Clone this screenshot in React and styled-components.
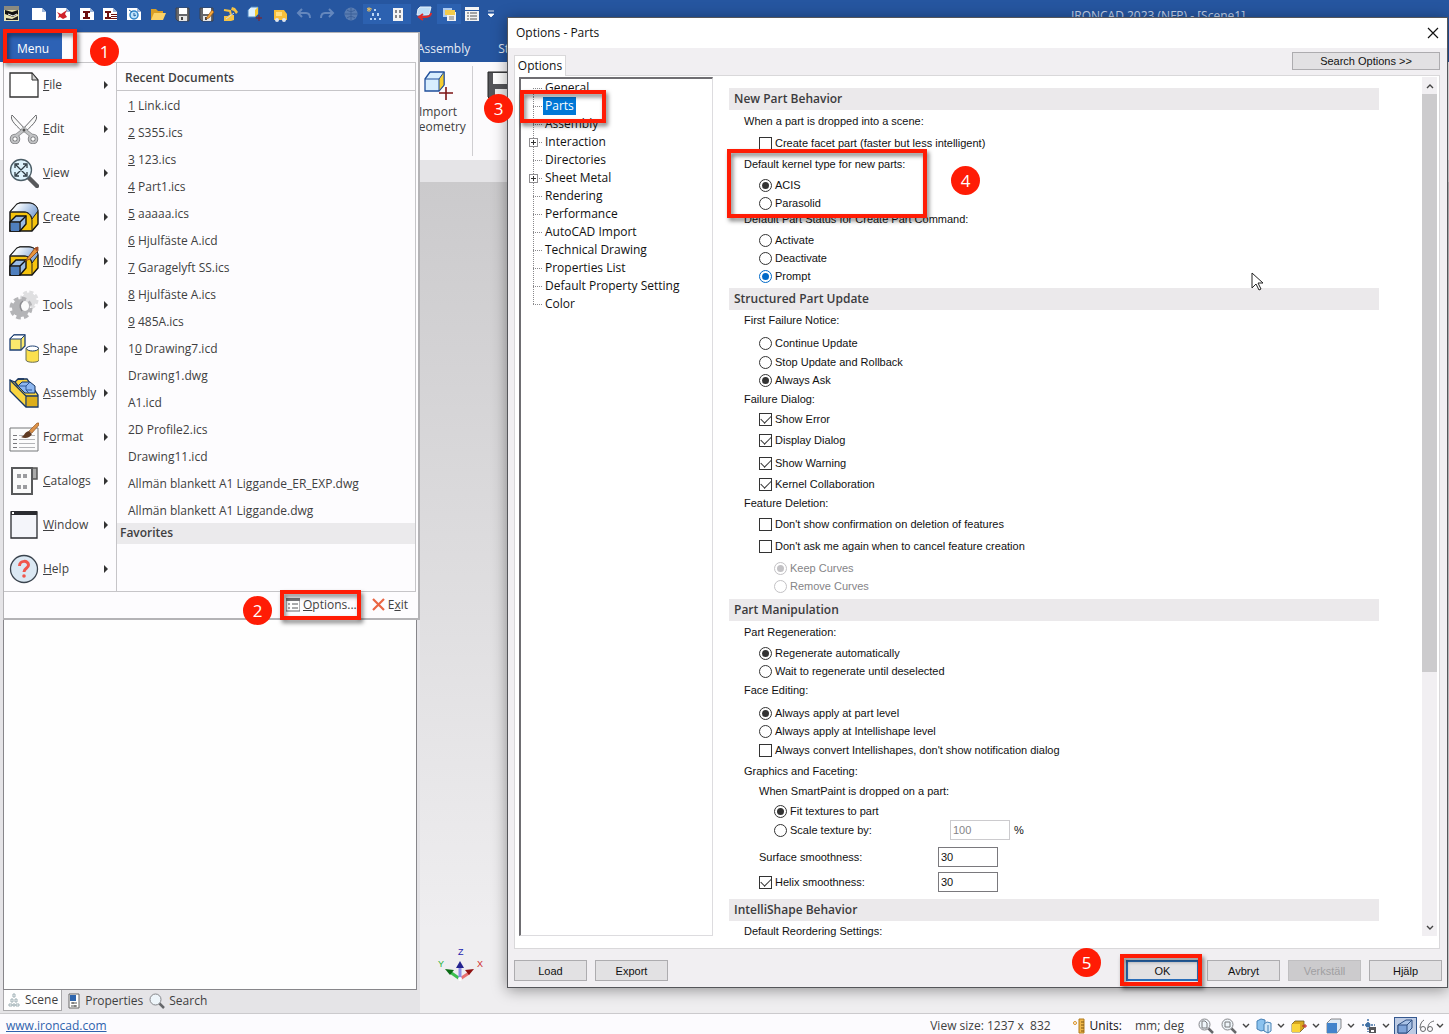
import React from 'react';
import styled, { createGlobalStyle, css } from 'styled-components';

const UI = '"Open Sans", "Noto Sans", sans-serif';
const SYS = '"Liberation Sans", Arial, sans-serif';

const GlobalStyle = createGlobalStyle`
  * { box-sizing: border-box; }
  html, body, #root { height: 100%; }
  body { margin: 0; overflow: hidden; font: 12px/16px ${UI}; color: #3f3f41; background: #efeef0; }
  button { font: inherit; color: inherit; padding: 0; border: 0; background: none; }
  ul { list-style: none; margin: 0; padding: 0; }
  h1, h2, h3, p { margin: 0; font: inherit; }
  svg { display: block; flex: none; }
`;

/* ---------- application shell ---------- */

const Shell = styled.div`
  position: relative;
  display: flex;
  flex-direction: column;
  height: 100vh;
  overflow: hidden;
`;

const TitleBar = styled.header`
  display: flex;
  align-items: center;
  flex: none;
  height: 28px;
  padding-left: 4px;
  background: #2656a0;
  > :first-child { margin-right: 7px; }
`;

const QuickButton = styled.button`
  display: grid;
  place-items: center;
  flex: none;
  width: ${p => p.$w || 24}px;
  height: 20px;
  opacity: ${p => (p.$dim ? 0.35 : 1)};
  background: ${p => (p.$on ? '#2c61b0' : 'none')};
`;

const AppTitle = styled.h1`
  flex: 1;
  padding: 4px 0 0 368px;
  text-align: center;
  white-space: nowrap;
  min-width: 0;
  overflow: hidden;
  color: #c3d2e8;
`;

const RibbonTabs = styled.nav`
  display: flex;
  flex: none;
  gap: 28px;
  height: 34px;
  padding: 13px 0 0 417px;
  color: #e4ebf5;
  background: #2656a0;
`;

const Ribbon = styled.div`
  display: flex;
  flex: none;
  height: 98px;
  padding: 4px 0 4px 404px;
  background: #fcfbfd;
`;

const RibbonGroup = styled.div`
  display: flex;
  border-right: 1px solid #cfced1;
`;

const RibbonButton = styled.button`
  display: flex;
  flex-direction: column;
  align-items: center;
  width: 68px;
  padding-top: 4px;
  line-height: 15px;
  svg { margin-bottom: 4px; }
`;

const DocumentStrip = styled.div`
  flex: none;
  height: 22px;
  background: #e5e4e7;
`;

const Workspace = styled.main`
  display: flex;
  flex: 1;
  min-height: 0;
  background: linear-gradient(#cbcacc, #dddcde 45%, #efeef0 90%);
`;

const SidePanel = styled.aside`
  display: flex;
  flex-direction: column;
  width: 420px;
  padding-left: 3px;
  background: #e5e4e7;
`;

const SceneTree = styled.div`
  flex: 1;
  margin-right: 3px;
  border: 1px solid #87868a;
  background: #fefefe;
`;

const SceneTabs = styled.div`
  display: flex;
  height: 23px;
`;

const SceneTab = styled.button`
  display: flex;
  align-items: center;
  gap: 4px;
  height: 21px;
  padding: 0 3px;
  border: solid #a9a8ab;
  border-width: ${p => (p.$active ? '0 1px 1px' : '0')};
  background: ${p => (p.$active ? '#fefefe' : 'none')};
`;

const Canvas = styled.section`
  display: flex;
  align-items: flex-end;
  flex: 1;
  padding: 0 0 29px 16px;
`;

const StatusBar = styled.footer`
  display: flex;
  align-items: center;
  flex: none;
  height: 21px;
  padding: 3px 4px 0 6px;
  border-top: 1px solid #cbcacd;
  background: #fcfbfe;
  white-space: pre;
  a { color: #2f62ad; text-decoration: underline; flex: 1; }
`;

const Units = styled.div`
  display: flex;
  align-items: center;
  gap: 5px;
  margin: 0 12px 0 22px;
  strong { font-weight: 400; color: #111; margin-right: 8px; }
`;

const StatusButton = styled.button`
  display: flex;
  align-items: center;
  gap: ${p => p.$gap || 5}px;
  width: ${p => p.$w}px;
  height: 18px;
  padding: 0 2px;
  ${p => p.$on && css`background: #bdcbe4; border: 1px solid #35588f;`}
`;

/* ---------- application menu ---------- */

const MenuPanel = styled.section`
  position: absolute;
  left: 3px;
  top: 32px;
  width: 417px;
  border: solid #b4b3b6;
  border-width: 1px 2px 2px 1px;
  background: #fdfcfe;
`;

const MenuTab = styled.button`
  display: block;
  width: 58px;
  height: 29px;
  padding-top: 2px;
  color: #fff;
  background: #2d62b5;
`;

const MenuColumns = styled.div`
  display: grid;
  grid-template-columns: 113px 1fr;
  margin-right: 2px;
  border: solid #c6c5c8;
  border-width: 1px 1px 1px 0;
`;

const MenuList = styled.ul`
  border-right: 1px solid #c6c5c8;
`;

const MenuItem = styled.button`
  display: flex;
  align-items: center;
  gap: 4px;
  width: 100%;
  height: 44px;
  padding: 0 8px 0 5px;
  text-align: left;
  &::after {
    content: '';
    margin-left: auto;
    border: solid transparent;
    border-width: 4px 0 4px 4px;
    border-left-color: #333;
  }
`;

const RecentTitle = styled.h2`
  height: 28px;
  padding: 7px 8px 0;
  border-bottom: 1px solid #c6c5c8;
  font-weight: 600;
`;

const RecentItem = styled.button`
  display: block;
  width: 100%;
  height: 27px;
  padding: 2px 0 0 11px;
  text-align: left;
`;

const FavoritesTitle = styled.h2`
  height: 21px;
  padding: 2px 3px;
  font-weight: 600;
  background: #ebeaec;
`;

const MenuFooter = styled.div`
  display: flex;
  justify-content: flex-end;
  gap: 15px;
  height: 26px;
  padding: 0 10px 1px 0;
`;

const FooterButton = styled.button`
  display: flex;
  align-items: center;
  gap: 3px;
`;

/* ---------- options dialog ---------- */

const Dialog = styled.section`
  position: absolute;
  left: 507px;
  right: 1px;
  top: 17px;
  bottom: 46px;
  display: flex;
  flex-direction: column;
  border: 1px solid #55565a;
  background: #f1eff2;
  box-shadow: 0 2px 14px rgba(0, 0, 0, 0.4);
  color: #111;
`;

const DialogHeader = styled.header`
  display: flex;
  align-items: center;
  justify-content: space-between;
  flex: none;
  height: 30px;
  padding: 0 8px;
  background: #fff;
`;

const DialogTop = styled.div`
  display: flex;
  justify-content: space-between;
  align-items: flex-end;
  flex: none;
  height: 27px;
  padding: 0 7px 0 6px;
`;

const DialogTab = styled.button`
  height: 21px;
  width: 52px;
  margin-bottom: -1px;
  border: 1px solid #d9d8da;
  border-bottom: 0;
  background: #fff;
  z-index: 1;
`;

const PushButton = styled.button`
  width: ${p => p.$w || 73}px;
  height: ${p => p.$h || 21}px;
  border: 1px solid #adacaf;
  background: #e2e1e3;
  font: 11px/16px ${SYS};
  ${p => p.$primary && css`border: 2px solid #2a6db8;`}
  &:disabled { color: #a09fa2; background: #cccbcd; border-color: #c0bfc1; }
`;

const SearchWrap = styled.div`
  align-self: flex-start;
  padding-top: 4px;
  display: flex;
`;

const DialogBody = styled.div`
  display: flex;
  flex: 1;
  min-height: 0;
  margin: 0 7px 0 6px;
  padding: 1px 2px 0 4px;
  border: 1px solid #d9d8da;
  background: #fff;
`;

const Tree = styled.ul`
  flex: none;
  width: 194px;
  margin-bottom: 12px;
  border: solid #6f6e72;
  border-width: 2px 1px 1px 2px;
  border-right-color: #dddcdf;
  border-bottom-color: #dddcdf;
`;

const TreeItem = styled.li`
  display: flex;
  align-items: center;
  height: 18px;
  padding-left: 8px;
`;

const TreeGuide = styled.span`
  display: flex;
  align-items: center;
  width: 14px;
  height: 18px;
  padding-left: 4px;
  background:
    repeating-linear-gradient(90deg, #8a898c 0 1px, transparent 1px 2px) 4px 9px / 9px 1px no-repeat,
    repeating-linear-gradient(#8a898c 0 1px, transparent 1px 2px)
      4px ${p => (p.$first ? '9px' : '0')} / 1px ${p => (p.$last ? '9px' : '18px')} no-repeat;
`;

const Expander = styled.button`
  display: grid;
  place-items: center;
  width: 9px;
  height: 9px;
  margin-left: -4px;
  border: 1px solid #8f8e91;
  background: #fff;
`;

const TreeLabel = styled.span`
  padding: 0 2px;
  line-height: 18px;
  ${p => p.$selected && css`color: #fff; background: #0078d7;`}
`;

const OptionsPane = styled.div`
  flex: 1;
  min-width: 0;
  overflow: hidden;
  padding: 11px 43px 0 16px;
  font: 11px/14px ${SYS};
`;

const SectionTitle = styled.h3`
  height: 22px;
  margin-top: ${p => p.$gap || 0}px;
  padding: 0 5px;
  font: 600 12px/22px ${UI};
  color: #3b3b3d;
  background: #ebe9eb;
`;

const Caption = styled.p`
  height: 14px;
  margin-top: ${p => p.$gap || 0}px;
  padding-left: ${p => (p.$inset ? 30 : 15)}px;
`;

const Line = styled.div`
  display: flex;
  align-items: center;
  height: ${p => p.$h || 18}px;
  margin-top: ${p => p.$gap || 0}px;
  padding-left: ${p => (p.$inset ? 45 : 30)}px;
`;

const Choice = styled.label`
  display: flex;
  align-items: center;
  gap: 3px;
  color: ${p => (p.$off ? '#858487' : 'inherit')};
`;

const Mark = styled.input`
  appearance: none;
  display: grid;
  place-items: center;
  width: 13px;
  height: 13px;
  margin: 0;
  border: 1px solid ${p => p.$tone || '#333'};
  border-radius: ${p => (p.type === 'radio' ? '50%' : '0')};
  background: #fff;
  &:checked::after {
    content: '';
    ${p => p.type === 'radio'
      ? css`width: 7px; height: 7px; border-radius: 50%; background: ${p.$tone || '#333'};`
      : css`width: 9px; height: 5px; margin-top: -3px; border: solid #333; border-width: 0 0 1px 1px; transform: rotate(-45deg);`}
  }
`;

const FieldLabel = styled.div`
  width: ${p => p.$w}px;
`;

const NumberBox = styled.input`
  width: 60px;
  height: 20px;
  margin: 0 4px 0 0;
  padding: 0 2px;
  border: 1px solid #7a797d;
  border-radius: 0;
  background: #fff;
  font: 11px/16px ${SYS};
  color: #111;
  &:disabled { color: #858487; border-color: #cccbce; }
`;

const ScrollBar = styled.div`
  display: flex;
  flex-direction: column;
  width: 15px;
  margin-bottom: 12px;
  background: #f1eff2;
`;

const ScrollButton = styled.button`
  display: grid;
  place-items: center;
  height: 17px;
  flex: none;
`;

const ScrollTrack = styled.div`
  flex: 1;
`;

const ScrollThumb = styled.div`
  height: 70%;
  background: #cccbcd;
`;

const DialogButtons = styled.footer`
  display: flex;
  flex: none;
  gap: 8px;
  height: 38px;
  padding: 11px 5px 0 6px;
  > :nth-child(2) { margin-right: auto; }
`;

/* ---------- walkthrough annotations ---------- */

const Frame = styled.div`
  position: absolute;
  left: ${p => p.$x}px;
  top: ${p => p.$y}px;
  width: ${p => p.$w}px;
  height: ${p => p.$h}px;
  border: 4px solid #ff1c05;
  filter: drop-shadow(2px 3px 2px rgba(0, 0, 0, 0.5));
  pointer-events: none;
`;

const Step = styled.div`
  position: absolute;
  left: ${p => p.$x}px;
  top: ${p => p.$y}px;
  width: 29px;
  height: 29px;
  border-radius: 50%;
  text-align: center;
  font: 17px/29px ${UI};
  color: #fff;
  background: #ff1c05;
`;

const OkSlot = styled.div`
  position: relative;
  display: flex;
`;

const Pointer = styled.svg`
  position: absolute;
  left: 1251px;
  top: 272px;
`;

/* ---------- drawings ---------- */

const Ico = ({ s = 16, h, children, ...rest }) => (
  <svg width={s} height={h || s} viewBox={`0 0 ${s} ${h || s}`} fill="none" aria-hidden="true" {...rest}>{children}</svg>
);

const Page = ({ children }) => (
  <Ico><path d="M1 2h10l4 4v8H1z" fill="#fff" /><path d="M11 2v4h4z" fill="#9db5d8" />{children}</Ico>
);

const Floppy = ({ children }) => (
  <Ico><path d="M1 2h13v13H3l-2-2z" fill="#66676b" stroke="#3d3e42" strokeWidth=".8" /><path d="M4 2h8v6H4z" fill="#fff" /><path d="M4 10h8v5H4z" fill="#e5e5e5" /><path d="M6 11h2v3H6z" fill="#444" />{children}</Ico>
);

const quick = [
  { n: 'IronCAD', w: 16, i: <Ico><path d="M0 0h15v15H0z" fill="#e8e3b4" /><path d="M0 0h15v4H0z" fill="#8a8a80" /><path d="M1 4l7 2 6-2v4l-5 3-8-3z" fill="#111" /><path d="M2 12l6 1 6-3v4H2z" fill="#222" /><path d="M4 8l5 2 4-2" stroke="#fff" /></Ico> },
  { n: 'New', i: <Page /> },
  { n: 'New scene', i: <Page><path d="M2 6l4 2 6-4-2 4 2 3-4 2-3-2-2 1 1-3z" fill="#d0222a" /></Page> },
  { n: 'New drawing', w: 23, i: <Page><path d="M4 5h7v2H9v4h2v2H4v-2h2V7H4z" fill="#6d1010" /></Page> },
  { n: 'New structure', i: <Page><path d="M3 5h6v2H7v4h2v2H3v-2h2V7H3zM9 8h6v1H9zM9 10h6v1H9zM9 12h6v1H9z" fill="#6d1010" /></Page> },
  { n: 'Find', i: <Page><circle cx="8" cy="9" r="4" fill="#bfe2fa" stroke="#2f86c8" strokeWidth="1.5" /><path d="M8 7v3l2-1M3 4l3 2" stroke="#1d5f9e" /></Page> },
  { n: 'Open', i: <Ico><path d="M1 3h5l2 2h5v9H1z" fill="#d99f26" /><path d="M1 14l3-7h12l-3 7z" fill="#fbd267" /></Ico> },
  { n: 'Save', w: 25, i: <Floppy /> },
  { n: 'Save as', i: <Floppy><path d="M8 11l5-7 2 2-5 6-3 1z" fill="#f4a63a" stroke="#8d4b12" strokeWidth=".6" /></Floppy> },
  { n: 'Send', i: <Ico><path d="M1 10h4l1-1h5v5l-3 1H1z" fill="#f5c244" /><path d="M9 1l3 1 3 4-2 2-2-3-3-1z" fill="#f5c244" /><path d="M1 4l6 1 1 4" stroke="#f5c244" strokeWidth="2" /><path d="M3 13l8-6" stroke="#c9d8ec" /></Ico> },
  { n: 'Import', w: 23, i: <Ico><path d="M1 4l3-3h7v7l-3 3H1z" fill="#dff1ff" stroke="#4b82bf" /><path d="M8 4l3-3v7l-3 3z" fill="#f5c933" /><path d="M12 9v6M9 12h6" stroke="#8b1a1a" /></Ico> },
  { n: 'Export', w: 27, i: <Ico><path d="M2 4h10l3 4v6H2z" fill="#f8bf3a" /><path d="M4 6h6v4H4z" fill="#ffdf83" /><circle cx="5" cy="14" r="2" fill="#dfe5ee" /><circle cx="12" cy="14" r="2" fill="#dfe5ee" /></Ico> },
  { n: 'Undo', w: 22, dim: 1, i: <Ico><path d="M6 3L2 7l4 4M2 7h8c3 0 4 2 4 5" stroke="#d8e3f5" strokeWidth="2" /></Ico> },
  { n: 'Redo', dim: 1, i: <Ico><path d="M10 3l4 4-4 4M14 7H6c-3 0-4 2-4 5" stroke="#d8e3f5" strokeWidth="2" /></Ico> },
  { n: 'Web', dim: 1, i: <Ico><circle cx="8" cy="8" r="6.500" fill="#b9c3d2" /><path d="M2 8h12M8 2v12M4 4c3 2 5 2 8 0M4 12c3-2 5-2 8 0" stroke="#64748c" /></Ico> },
  { n: 'Tree', on: 1, w: 22, i: <Ico><path d="M3 1v5M1 3h5M1 2l4 3M5 2L1 5" stroke="#f4c55c" strokeWidth=".8" /><path d="M8 3h2v2H8zM6 7h2v3H6zM11 7h2v3h-2zM4 12h2v2H4zM8 12h2v2H8zM13 12h2v2h-2z" fill="#b9d5f5" /></Ico> },
  { n: 'Catalog', on: 1, w: 26, i: <Ico><path d="M3 2h10v13H3z" fill="#f4f4f4" /><path d="M5 4h2v3H5zM9 4h2v3H9zM5 9h2v3H5zM9 9h2v3H9z" fill="#85868a" /></Ico> },
  { n: 'Swap', w: 26, i: <Ico><path d="M2 3l2-2h11l-2 8H1z" fill="#bddcf5" stroke="#e4f0fb" /><path d="M15 7c0 3-3 4-7 4H4M7 8l-4 3 4 3" stroke="#dc2b2b" strokeWidth="2" /></Ico> },
  { n: 'Layers', on: 1, i: <Ico><path d="M2 2h9v9H2z" fill="#aecbef" /><path d="M6 6h9v9H6z" fill="#f2f2f2" /><path d="M4 4h10v5H4z" fill="#f4cb4b" /><path d="M8 11h5M8 13h5" stroke="#777" /></Ico> },
  { n: 'List', w: 22, i: <Ico><path d="M1 1h14v3H1zM1 5h14v10H1z" fill="#f4f4f4" /><path d="M3 7h2M3 10h2M3 13h2M6 7h7M6 10h7M6 13h7" stroke="#555" /></Ico> },
  { n: 'Customize', w: 16, i: <Ico s={8}><path d="M1 1h6M1 4h6L4 7z" stroke="#fff" fill="#fff" strokeWidth=".8" /></Ico> },
];

const Block = ({ pencil }) => (
  <Ico s={30}>
    <defs>
      <linearGradient id="blockTop" x1="0" y1="0" x2="1" y2="0.400">
        <stop offset="0.300" stopColor="#f4f8fd" /><stop offset="1" stopColor="#86a9d8" />
      </linearGradient>
    </defs>
    <path d="M1 10L8 2l3-1h9c5 0 9 4 9 9v12l-6 7H1z" fill="#f6c40e" stroke="#111" strokeWidth="1.400" />
    <path d="M1 10L8 2l3-1h9c5 0 9 4 9 8l-6 8c-1-5-4-7-8-7z" fill="url(#blockTop)" stroke="#222" />
    <path d="M1 10h14c4 0 7 3 8 8v11" stroke="#222" />
    <path d="M1 20l6-6h10v8l-6 7H1z" fill="#9cbce6" stroke="#111" strokeWidth="1.400" />
    <path d="M1 20h10l6-6M11 20v9" stroke="#111" strokeWidth="1.400" />
    <path d="M2 21h8v8H2z" fill="#4f7fbe" />
    {pencil && <path d="M17 14L26 2l3-1v4l-8 8-5 2z" fill="#e9953b" stroke="#7b3a10" strokeWidth=".8" />}
    {pencil && <path d="M26 2l3-1v3l-2 1z" fill="#a34a2a" />}
  </Ico>
);

const menu = [
  ['', 'F', 'ile', <Ico s={30} key="i"><path d="M1 3h22l6 7v17H1z" fill="#fff" stroke="#333" strokeWidth="1.3" /><path d="M23 3v7h6z" fill="#d2d2d2" stroke="#333" /></Ico>],
  ['', 'E', 'dit', <Ico s={30} key="i"><path d="M3 1c-2 4 1 8 11 17l3-2z" fill="#fafafa" stroke="#66676a" /><path d="M27 1c2 4-1 8-11 17l-3-2z" fill="#fafafa" stroke="#66676a" /><path d="M13 14l10 8M17 14L7 22" stroke="#8b8c8f" strokeWidth="4" /><circle cx="6" cy="25" r="3.5" fill="#fff" stroke="#77787b" strokeWidth="3.500" /><circle cx="24" cy="25" r="3.5" fill="#fff" stroke="#77787b" strokeWidth="3.500" /><circle cx="6" cy="25" r="3.5" stroke="#c2c3c5" strokeWidth="2" /><circle cx="24" cy="25" r="3.5" stroke="#c2c3c5" strokeWidth="2" /><path d="M13 14l10 8M17 14L7 22" stroke="#c2c3c5" strokeWidth="2.500" /><circle cx="15" cy="16" r="1.5" fill="#555" /></Ico>],
  ['', 'V', 'iew', <Ico s={30} key="i"><path d="M20 20l8 8" stroke="#58595b" strokeWidth="4.5" strokeLinecap="round" /><circle cx="12" cy="12" r="10.5" fill="#def3fc" stroke="#4b5d66" strokeWidth="1.3" /><path d="M7 7l10 10M17 7L7 17M6 10V6h4M14 6h4v4M18 14v4h-4M10 18H6v-4" stroke="#2e3b42" strokeWidth="1.3" /></Ico>],
  ['', 'C', 'reate', <Block key="i" />],
  ['', 'M', 'odify', <Block pencil key="i" />],
  ['', 'T', 'ools', <Ico s={30} key="i"><g stroke="#dfdfe1"><circle cx="20" cy="10" r="7" fill="#dfdfe1" strokeWidth="1" /><circle cx="20" cy="10" r="8" strokeWidth="3" strokeDasharray="4 2.300" /></g><circle cx="12" cy="18" r="9" fill="#b4b4b7" /><circle cx="12" cy="18" r="9.500" stroke="#b4b4b7" strokeWidth="4" strokeDasharray="4.500 3" /><ellipse cx="16" cy="16" rx="4" ry="5" fill="#fbfbfb" /><path d="M14 11c-3 2-4 6-1 10" stroke="#8d8d91" strokeWidth="1.5" /></Ico>],
  ['', 'S', 'hape', <Ico s={30} key="i"><path d="M1 5l4-4h11v11l-4 4H1z" fill="#fbe96d" stroke="#1d3f73" strokeWidth="1.3" /><path d="M1 5l4-4h11l-4 4z" fill="#fff" stroke="#1d3f73" /><path d="M12 5v11" stroke="#1d3f73" /><path d="M17 14v12c0 3 13 3 13 0V14z" fill="#fbe04d" stroke="#6b6f55" /><ellipse cx="23.500" cy="14.500" rx="6" ry="2.500" fill="#fff" stroke="#1d3f73" /></Ico>],
  ['', 'A', 'ssembly', <Ico s={30} key="i"><path d="M1 2l5 2 3-3h9l11 16v12H17L1 13z" fill="#f9d540" stroke="#173561" strokeWidth="1.300" /><path d="M1 2l16 16v11M17 18h12M6 4l3 4M9 1l6 0" stroke="#173561" strokeWidth="1.300" /><path d="M18 19h10v9H18z" fill="#dcae1c" /><path d="M9 8l4-4h8l5 4v7H16z" fill="#8db6ef" stroke="#173561" /><path d="M9 8h8l4-4M17 8v4l3 3M17 12h6" stroke="#2c5699" /></Ico>],
  ['F', 'o', 'rmat', <Ico s={30} key="i"><path d="M1 6h28v23H1z" fill="#fcfcfc" stroke="#77787b" /><path d="M4 13.500h4M4 17.500h4M4 21.500h4M4 25.500h4" stroke="#77787b" /><path d="M10 13.500h16M10 17.500h16M10 21.500h16M10 25.500h16" stroke="#b4b5b8" /><path d="M20 9l8-8h2v2l-7 8z" fill="#dc9149" stroke="#8a4d18" strokeWidth=".6" /><path d="M12 15c4-1 3-5 8-6l3 3c-2 4-7 5-11 3z" fill="#5f3a22" /></Ico>],
  ['', 'C', 'atalogs', <Ico s={30} key="i"><path d="M23 2h5v11h-5z" fill="#aaa" stroke="#555" strokeWidth="1.500" /><path d="M3 2h20v26H3z" fill="#fbfbfb" stroke="#58595b" strokeWidth="2" /><path d="M8 8h4v4H8zM14 8h4v4h-4zM8 19h4v4H8zM14 19h4v4h-4z" fill="#9b9c9f" /></Ico>],
  ['', 'W', 'indow', <Ico s={30} key="i"><path d="M2 2h26v26H2z" fill="#f4f5fa" stroke="#2a2b30" strokeWidth="1.3" /><path d="M2 1h26v4H2z" fill="#2a2b30" /><path d="M3 2h2v2H3z" fill="#fff" /></Ico>],
  ['', 'H', 'elp', <Ico s={30} key="i"><circle cx="15" cy="15" r="13.500" fill="#dbe8f3" stroke="#3b444e" strokeWidth="1.3" /><path d="M10.500 12c0-6 9-6 9-1 0 3.500-4.500 3-4.500 7" stroke="#f0564c" strokeWidth="3" /><circle cx="15" cy="22" r="1.800" fill="#f0564c" /></Ico>],
];

const recent = [
  ['', '1', ' Link.icd'], ['', '2', ' S355.ics'], ['', '3', ' 123.ics'], ['', '4', ' Part1.ics'],
  ['', '5', ' aaaaa.ics'], ['', '6', ' Hjulfäste A.icd'], ['', '7', ' Garagelyft SS.ics'],
  ['', '8', ' Hjulfäste A.ics'], ['', '9', ' 485A.ics'], ['1', '0', ' Drawing7.icd'],
  ['Drawing1.dwg'], ['A1.icd'], ['2D Profile2.ics'], ['Drawing11.icd'],
  ['Allmän blankett A1 Liggande_ER_EXP.dwg'], ['Allmän blankett A1 Liggande.dwg'],
];

const treeItems = ['General', 'Parts', 'Assembly', 'Interaction', 'Directories', 'Sheet Metal', 'Rendering',
  'Performance', 'AutoCAD Import', 'Technical Drawing', 'Properties List', 'Default Property Setting', 'Color'];
const expandable = ['Interaction', 'Sheet Metal'];

const Hot = ({ parts: [a, key, b] }) => <span>{a}{key && <u>{key}</u>}{b}</span>;

const Option = ({ type = 'radio', group, on, off, tone, gap, inset, children }) => (
  <Line $gap={gap} $inset={inset}>
    <Choice $off={off}>
      <Mark type={type} name={group} defaultChecked={on} disabled={off} $tone={off ? '#c3c2c5' : tone} />
      {children}
    </Choice>
  </Line>
);

const Chevron = ({ up, s = 8 }) => (
  <Ico s={s}><path d={up ? 'M1 6l3-3 3 3' : 'M1 2l3 3 3-3'} stroke="#444" strokeWidth="1.400" /></Ico>
);

const Lens = ({ inner }) => (
  <Ico><path d="M10 10l5 5" stroke="#66676a" strokeWidth="2.500" /><circle cx="6.500" cy="6.500" r="5.500" fill="#eef5fa" stroke="#85868a" /><path d={inner} stroke="#77787b" /></Ico>
);

const Cube = ({ front, side, children }) => (
  <Ico><path d="M1 5l4-4h10v9l-4 5H1z" fill={side} stroke="#6c6d70" strokeWidth=".8" /><path d="M1 5h10v10H1z" fill={front} />{children}</Ico>
);

const views = [
  { n: 'Zoom page', w: 23, i: <Lens inner="M4 3h3l2 2v5H4z" /> },
  { n: 'Zoom window', w: 35, more: 1, i: <Lens inner="M4 4h5v5H4z" /> },
  { n: 'Camera', w: 35, more: 1, i: <Ico><path d="M1 3l4-2 4 1v10l-4 1-4-2z" fill="#8ac2ee" stroke="#4580b5" /><path d="M8 6l3-2 4 1v8l-3 2-4-2z" fill="#cfe7f8" stroke="#4580b5" /><path d="M12 7v8" stroke="#4580b5" /></Ico> },
  { n: 'Face', w: 35, more: 1, i: <Ico><path d="M1 6l3-3h9v7l-4 4H1z" fill="#d9a81e" stroke="#6b5a22" strokeWidth=".8" /><path d="M1 6h8v8H1z" fill="#fad43a" /><path d="M11 8h5M14 6v4" stroke="#bd2222" /></Ico> },
  { n: 'Shading', w: 35, more: 1, i: <Cube front="#4283cb" side="#dfe9f3" /> },
  { n: 'Save view', w: 35, more: 1, i: <Ico><path d="M7 1v13M1 7h13" stroke="#3e6fa5" strokeWidth="1.500" strokeDasharray="2 1" /><circle cx="7" cy="7" r="2.500" fill="#3e6fa5" /><path d="M8 9h7v6H8z" fill="#55565a" /><path d="M10 12h3v2h-3z" fill="#fff" /></Ico> },
  { n: 'Perspective', w: 23, on: 1, i: <Ico><path d="M1 7l8-5h6v8l-5 5H1z" fill="#a9c2e6" stroke="#2e4f82" /><path d="M1 7h9v8H1z" fill="#7ea3d8" stroke="#2e4f82" /><path d="M10 7l5-5" stroke="#2e4f82" /></Ico> },
  { n: 'Glasses', w: 28, gap: 1, more: 1, i: <Ico><path d="M1 10c0-4 2-7 4-8M9 10c0-4 2-6 6-7" stroke="#66676a" /><circle cx="4" cy="11" r="2.500" stroke="#66676a" /><circle cx="11" cy="11" r="2.500" stroke="#66676a" /></Ico> },
];

/* ---------- page ---------- */

export default function App() {
  return (
    <>
      <GlobalStyle />
      <Shell>
        <TitleBar>
          {quick.map(q => (
            <QuickButton key={q.n} aria-label={q.n} $w={q.w} $dim={q.dim} $on={q.on}>{q.i}</QuickButton>
          ))}
          <AppTitle>IRONCAD 2023 (NFP) - [Scene1]</AppTitle>
        </TitleBar>
        <RibbonTabs><span>Assembly</span><span>Structure</span></RibbonTabs>
        <Ribbon>
          <RibbonGroup>
            <RibbonButton>
              <Ico s={30}>
                <path d="M2 9l5-7h14v13l-5 6H2z" fill="#d8eefe" stroke="#1f4f9b" strokeWidth="1.3" />
                <path d="M16 9l5-7v13l-5 6z" fill="#f6ce2f" stroke="#1f4f9b" />
                <path d="M2 9h14" stroke="#1f4f9b" /><path d="M23 17v13M16 23h14" stroke="#7c1414" strokeWidth="1.600" />
              </Ico>
              Import<br />Geometry
            </RibbonButton>
          </RibbonGroup>
          <RibbonButton aria-label="Save">
            <Ico s={40} h={30}><path d="M1 2h32v28H4l-3-3z" fill="#55565a" stroke="#222" /><path d="M6 3h24v11H6z" fill="#fff" /><path d="M8 19h18v10H8z" fill="#eee" /></Ico>
          </RibbonButton>
        </Ribbon>
        <DocumentStrip />
        <Workspace>
          <SidePanel>
            <SceneTree />
            <SceneTabs>
              <SceneTab $active>
                <Ico s={14}><path d="M6 1h2v3H6zM4 6h2v3H4zM8 6h2v3H8zM2 11h3v2H2zM6 11h2v2H6zM9 11h3v2H9z" stroke="#9fb0b5" /></Ico>
                Scene
              </SceneTab>
              <SceneTab>
                <Ico s={16}><path d="M4 1h10v14H4z" fill="#fff" stroke="#666" /><path d="M5 2h6v6H5z" fill="#2e65ae" /><path d="M6 10h6M6 13h6M8 9v2M10 12v2" stroke="#555" /></Ico>
                Properties
              </SceneTab>
              <SceneTab><Lens inner="" />Search</SceneTab>
            </SceneTabs>
          </SidePanel>
          <Canvas>
            <Ico s={50} h={36} role="img">
              <path d="M24 31L14 24" stroke="#3cbf4f" strokeWidth="3" /><path d="M9 21l9 1-4 5z" fill="#0b6b16" />
              <path d="M24 31l9-6" stroke="#e87070" strokeWidth="3" /><path d="M38 21l-9 1 4 5z" fill="#8f1111" />
              <path d="M24 31V20" stroke="#8d8de8" strokeWidth="3" /><path d="M24 13l-4 7h8z" fill="#23238f" />
              <circle cx="24" cy="31" r="2" fill="#fff" />
              <text x="22" y="7" fontSize="9" fill="#1c1cae" fontFamily={SYS}>Z</text>
              <text x="2" y="19" fontSize="9" fill="#27b336" fontFamily={SYS}>Y</text>
              <text x="41" y="19" fontSize="9" fill="#cf2a2a" fontFamily={SYS}>X</text>
            </Ico>
          </Canvas>
        </Workspace>
        <StatusBar>
          <a href="#home">www.ironcad.com</a>
          <span>View size: 1237 x  832</span>
          <Units>
            <Ico s={12} h={16}><path d="M6 1h5v14H6z" fill="#f0b84a" stroke="#b07b1c" /><path d="M8 4h3M8 7h3M8 10h3M8 13h3" stroke="#7b5410" /><circle cx="2" cy="5" r="1.500" stroke="#d89224" /></Ico>
            <strong>Units:</strong><span>mm; deg</span>
          </Units>
          {views.map(v => (
            <StatusButton key={v.n} aria-label={v.n} $w={v.w} $gap={v.gap} $on={v.on}>{v.i}{v.more && <Chevron />}</StatusButton>
          ))}
        </StatusBar>

        <MenuPanel>
          <MenuTab>Menu</MenuTab>
          <MenuColumns>
            <MenuList>
              {menu.map(([a, k, b, icon]) => (
                <li key={k + b}><MenuItem>{icon}<Hot parts={[a, k, b]} /></MenuItem></li>
              ))}
            </MenuList>
            <div>
              <RecentTitle>Recent Documents</RecentTitle>
              <ul>
                {recent.map(r => <li key={r.join('')}><RecentItem><Hot parts={r} /></RecentItem></li>)}
              </ul>
              <FavoritesTitle>Favorites</FavoritesTitle>
            </div>
          </MenuColumns>
          <MenuFooter>
            <FooterButton>
              <Ico s={14}><path d="M0 1h14v12H0z" fill="#fff" stroke="#66676a" /><path d="M0 0h14v3H0z" fill="#77787b" /><path d="M2 6h2M2 10h2M6 6h6M6 10h6" stroke="#55565a" /></Ico>
              <Hot parts={['', 'O', 'ptions...']} />
            </FooterButton>
            <FooterButton>
              <Ico s={13}><path d="M1 1l11 11M12 1L1 12" stroke="#ea6543" strokeWidth="2.200" /></Ico>
              <Hot parts={['E', 'x', 'it']} />
            </FooterButton>
          </MenuFooter>
        </MenuPanel>

        <Dialog role="dialog" aria-label="Options - Parts">
          <DialogHeader>
            <h2>Options - Parts</h2>
            <button aria-label="Close"><Ico s={12}><path d="M1 1l10 10M11 1L1 11" stroke="#111" strokeWidth="1.200" /></Ico></button>
          </DialogHeader>
          <DialogTop>
            <DialogTab>Options</DialogTab>
            <SearchWrap><PushButton $w={148} $h={18}>Search Options &gt;&gt;</PushButton></SearchWrap>
          </DialogTop>
          <DialogBody>
            <Tree>
              {treeItems.map((t, i) => (
                <TreeItem key={t}>
                  <TreeGuide $first={i === 0} $last={i === treeItems.length - 1}>
                    {expandable.includes(t) && (
                      <Expander aria-label={`Expand ${t}`}><Ico s={5}><path d="M0 2.500h5M2.500 0v5" stroke="#333" /></Ico></Expander>
                    )}
                  </TreeGuide>
                  <TreeLabel $selected={t === 'Parts'}>{t}</TreeLabel>
                </TreeItem>
              ))}
            </Tree>
            <OptionsPane>
              <SectionTitle>New Part Behavior</SectionTitle>
              <Caption $gap={4}>When a part is dropped into a scene:</Caption>
              <Option type="checkbox" gap={6}>Create facet part (faster but less intelligent)</Option>
              <Caption $gap={5}>Default kernel type for new parts:</Caption>
              <Option group="kernel" on gap={5}>ACIS</Option>
              <Option group="kernel">Parasolid</Option>
              <Caption>Default Part Status for Create Part Command:</Caption>
              <Option group="status" gap={5}>Activate</Option>
              <Option group="status">Deactivate</Option>
              <Option group="status" on tone="#0069c8">Prompt</Option>

              <SectionTitle $gap={3}>Structured Part Update</SectionTitle>
              <Caption $gap={3}>First Failure Notice:</Caption>
              <Option group="failure" gap={7}>Continue Update</Option>
              <Option group="failure" gap={1}>Stop Update and Rollback</Option>
              <Option group="failure" on>Always Ask</Option>
              <Caption $gap={3}>Failure Dialog:</Caption>
              <Option type="checkbox" on gap={4}>Show Error</Option>
              <Option type="checkbox" on gap={3}>Display Dialog</Option>
              <Option type="checkbox" on gap={5}>Show Warning</Option>
              <Option type="checkbox" on gap={3}>Kernel Collaboration</Option>
              <Caption $gap={3}>Feature Deletion:</Caption>
              <Option type="checkbox" gap={5}>Don't show confirmation on deletion of features</Option>
              <Option type="checkbox" gap={4}>Don't ask me again when to cancel feature creation</Option>
              <Option group="curves" on off inset gap={4}>Keep Curves</Option>
              <Option group="curves" off inset>Remove Curves</Option>

              <SectionTitle $gap={4}>Part Manipulation</SectionTitle>
              <Caption $gap={4}>Part Regeneration:</Caption>
              <Option group="regen" on gap={5}>Regenerate automatically</Option>
              <Option group="regen">Wait to regenerate until deselected</Option>
              <Caption $gap={3}>Face Editing:</Caption>
              <Option group="face" on gap={7}>Always apply at part level</Option>
              <Option group="face">Always apply at Intellishape level</Option>
              <Option type="checkbox" gap={1}>Always convert Intellishapes, don't show notification dialog</Option>
              <Caption $gap={5}>Graphics and Faceting:</Caption>
              <Caption $inset $gap={6}>When SmartPaint is dropped on a part:</Caption>
              <Option group="texture" on inset gap={4}>Fit textures to part</Option>
              <Line $inset $gap={0} $h={20}>
                <FieldLabel $w={176}>
                  <Choice><Mark type="radio" name="texture" />Scale texture by:</Choice>
                </FieldLabel>
                <NumberBox aria-label="Texture scale" defaultValue="100" disabled />%
              </Line>
              <Line $gap={7} $h={20}>
                <FieldLabel $w={179}><label htmlFor="surface">Surface smoothness:</label></FieldLabel>
                <NumberBox id="surface" defaultValue="30" />
              </Line>
              <Line $gap={5} $h={20}>
                <FieldLabel $w={179}>
                  <Choice><Mark type="checkbox" defaultChecked />Helix smoothness:</Choice>
                </FieldLabel>
                <NumberBox aria-label="Helix smoothness value" defaultValue="30" />
              </Line>

              <SectionTitle $gap={7}>IntelliShape Behavior</SectionTitle>
              <Caption $gap={3}>Default Reordering Settings:</Caption>
            </OptionsPane>
            <ScrollBar>
              <ScrollButton aria-label="Scroll up"><Chevron up /></ScrollButton>
              <ScrollTrack><ScrollThumb /></ScrollTrack>
              <ScrollButton aria-label="Scroll down"><Chevron /></ScrollButton>
            </ScrollBar>
          </DialogBody>
          <DialogButtons>
            <PushButton>Load</PushButton>
            <PushButton>Export</PushButton>
            <OkSlot>
              <PushButton $primary>OK</PushButton>
              <Frame $x={-6} $y={-6} $w={82} $h={32} />
              <Step $x={-54} $y={-12}>5</Step>
            </OkSlot>
            <PushButton>Avbryt</PushButton>
            <PushButton disabled>Verkställ</PushButton>
            <PushButton>Hjälp</PushButton>
          </DialogButtons>
        </Dialog>

        <Frame $x={3} $y={29} $w={74} $h={34} />
        <Step $x={90} $y={37}>1</Step>
        <Frame $x={280} $y={590} $w={81} $h={30} />
        <Step $x={243} $y={596}>2</Step>
        <Frame $x={520} $y={90} $w={86} $h={33} />
        <Step $x={484} $y={94}>3</Step>
        <Frame $x={727} $y={149} $w={200} $h={69} />
        <Step $x={951} $y={166}>4</Step>
        <Pointer width="14" height="20" viewBox="0 0 14 20" aria-hidden="true">
          <path d="M1 1v15l4-4 3 6 2-1-3-6h5z" fill="#fff" stroke="#222" />
        </Pointer>
      </Shell>
    </>
  );
}
